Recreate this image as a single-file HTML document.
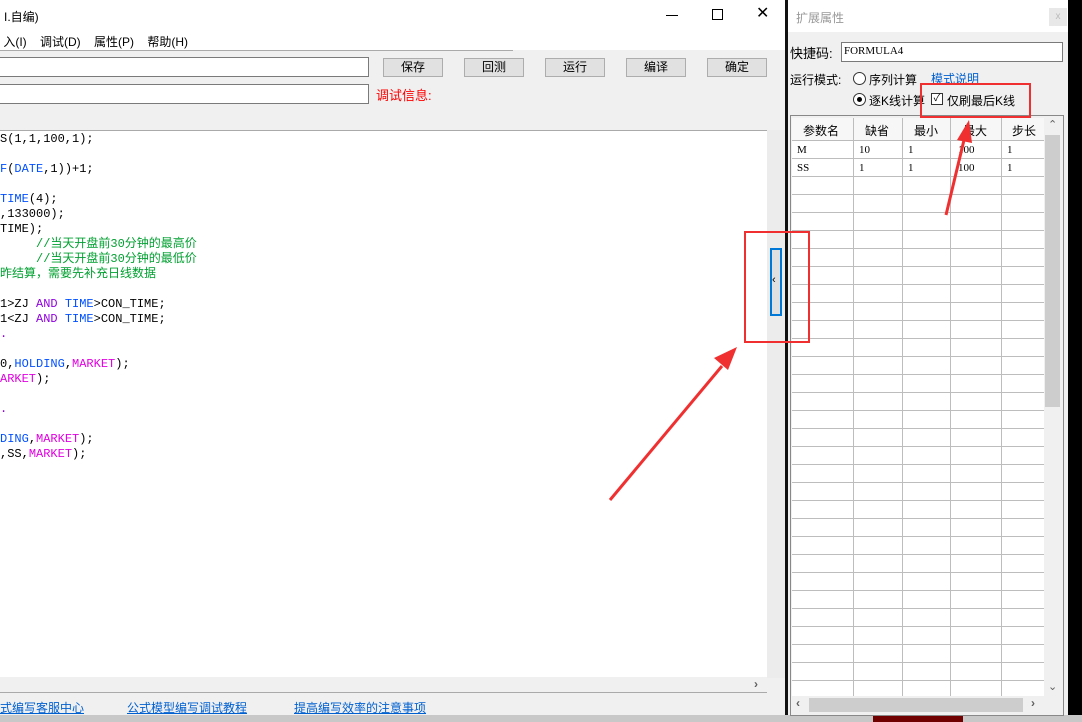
<!DOCTYPE html>
<html><head><meta charset="utf-8"><style>
*{margin:0;padding:0;box-sizing:border-box}
body{width:1082px;height:722px;overflow:hidden;position:relative;background:#f0f0f0;font-family:"Liberation Sans","Noto Sans CJK SC",sans-serif;font-size:12px;color:#000}
.a{position:absolute}
.code{font-family:"Liberation Mono","Noto Sans CJK SC",monospace;font-size:12px;line-height:15px;white-space:pre}
.b{color:#0050ff}.p{color:#e000e0}.v{color:#9000e0}.g{color:#00a030}
.btn{position:absolute;top:58px;width:60px;height:19px;background:#e1e1e1;border:1px solid #adadad;text-align:center;line-height:17px;font-size:12px}
.inp{position:absolute;background:#fff;border:1px solid #7a7a7a}
.lnk{color:#0060d0;text-decoration:underline}
.cell{font-family:'Liberation Serif',serif;font-size:11px;line-height:18px}
</style></head><body>
<div class="a" style="left:0;top:0;width:785px;height:50px;background:#fff"></div>
<div class="a" style="left:4px;top:8px;font-size:12px">I.自编)</div>
<div class="a" style="left:0;top:33px;font-size:12px">&nbsp;入(I)&nbsp;&nbsp;&nbsp;&nbsp;调试(D)&nbsp;&nbsp;&nbsp;&nbsp;属性(P)&nbsp;&nbsp;&nbsp;&nbsp;帮助(H)</div>
<div class="a" style="left:666px;top:15px;width:12px;height:1px;background:#000"></div>
<div class="a" style="left:712px;top:9px;width:11px;height:11px;border:1px solid #000"></div>
<div class="a" style="left:756px;top:5px;font-size:16px;line-height:18px">✕</div>
<div class="a" style="left:0;top:50px;width:513px;height:1px;background:#aaa"></div>
<div class="inp" style="left:-2px;top:57px;width:371px;height:20px"></div>
<div class="inp" style="left:-2px;top:84px;width:371px;height:20px"></div>
<div class="btn" style="left:383px">保存</div>
<div class="btn" style="left:464px">回测</div>
<div class="btn" style="left:545px">运行</div>
<div class="btn" style="left:626px">编译</div>
<div class="btn" style="left:707px">确定</div>
<div class="a" style="left:376px;top:85px;color:#f00;font-size:13px">调试信息:</div>
<div class="a" style="left:0;top:130px;width:767px;height:547px;background:#fff;border-top:1px solid #aaa"></div>
<div class="a code" style="left:0;top:132px">S(1,1,100,1);

<span class="b">F</span>(<span class="b">DATE</span>,1))+1;

<span class="b">TIME</span>(4);
,133000);
TIME);
<span class="g">     //当天开盘前30分钟的最高价</span>
<span class="g">     //当天开盘前30分钟的最低价</span>
<span class="g">昨结算，需要先补充日线数据</span>

1&gt;ZJ <span class="v">AND</span> <span class="b">TIME</span>&gt;CON_TIME;
1&lt;ZJ <span class="v">AND</span> <span class="b">TIME</span>&gt;CON_TIME;
<span class="v">.</span>

0,<span class="b">HOLDING</span>,<span class="p">MARKET</span>);
<span class="p">ARKET</span>);

<span class="v">.</span>

<span class="b">DING</span>,<span class="p">MARKET</span>);
,SS,<span class="p">MARKET</span>);</div>
<div class="a" style="left:767px;top:130px;width:18px;height:548px;background:#ececec"></div>
<div class="a" style="left:0;top:677px;width:767px;height:16px;background:#f0f0f0;border-bottom:1px solid #aaa"></div>
<div class="a" style="left:754px;top:677px;color:#606060;font-size:12px;font-weight:bold">›</div>
<div class="a" style="left:0;top:699px;font-size:12px"><span class="lnk">式编写客服中心</span></div>
<div class="a" style="left:127px;top:699px;font-size:12px"><span class="lnk">公式模型编写调试教程</span></div>
<div class="a" style="left:294px;top:699px;font-size:12px"><span class="lnk">提高编写效率的注意事项</span></div>
<div class="a" style="left:0;top:715px;width:1082px;height:7px;background:#c8c8c8"></div>
<div class="a" style="left:873px;top:715px;width:90px;height:7px;background:#700000"></div>
<div class="a" style="left:770px;top:248px;width:12px;height:68px;background:#e0e0e0;border:2px solid #0078d7"></div>
<div class="a" style="left:772px;top:274px;font-size:11px">‹</div>
<div class="a" style="left:785px;top:0;width:3px;height:715px;background:#111"></div>
<div class="a" style="left:1068px;top:0;width:14px;height:715px;background:#000"></div>
<div class="a" style="left:788px;top:0;width:280px;height:715px;background:#f0f0f0"></div>
<div class="a" style="left:788px;top:0;width:280px;height:32px;background:#fff"></div>
<div class="a" style="left:796px;top:9px;color:#999;font-size:12px">扩展属性</div>
<div class="a" style="left:1049px;top:8px;width:18px;height:18px;background:#e8e8e8;color:#bbb;font-size:10px;text-align:center;line-height:18px">x</div>
<div class="a" style="left:790px;top:43px;font-size:13px">快捷码:</div>
<div class="inp" style="left:841px;top:42px;width:222px;height:20px;font-family:'Liberation Serif',serif;font-size:11px;padding:2px 2px">FORMULA4</div>
<div class="a" style="left:790px;top:71px;font-size:12px">运行模式:</div>
<div class="a" style="left:853px;top:72px;width:13px;height:13px;border:1px solid #333;border-radius:50%;background:#fff"></div>
<div class="a" style="left:869px;top:71px">序列计算</div>
<div class="a" style="left:931px;top:70px"><span class="lnk">模式说明</span></div>
<div class="a" style="left:853px;top:93px;width:13px;height:13px;border:1px solid #333;border-radius:50%;background:#fff"></div>
<div class="a" style="left:857px;top:97px;width:5px;height:5px;border-radius:50%;background:#000"></div>
<div class="a" style="left:869px;top:92px">逐K线计算</div>
<div class="a" style="left:931px;top:93px;width:12px;height:12px;border:1px solid #333;background:#fff;font-size:10px;line-height:10px;text-align:center">✓</div>
<div class="a" style="left:947px;top:92px">仅刷最后K线</div>
<div class="a" style="left:790px;top:115px;width:274px;height:601px;border:1px solid #888;background:#f0f0f0"></div>
<div class="a" style="left:792px;top:118px;width:252px;height:578px;background:#fff;
background-image:repeating-linear-gradient(to bottom,transparent 0,transparent 17px,#bdbdbd 17px,#bdbdbd 18px);background-position:0 5px"></div>
<div class="a" style="left:792px;top:118px;width:252px;height:23px;background:#f7f7f7;border-bottom:1px solid #bbb"></div>
<div class="a" style="left:853px;top:118px;width:1px;height:578px;background:#bdbdbd"></div>
<div class="a" style="left:902px;top:118px;width:1px;height:578px;background:#bdbdbd"></div>
<div class="a" style="left:950px;top:118px;width:1px;height:578px;background:#bdbdbd"></div>
<div class="a" style="left:1001px;top:118px;width:1px;height:578px;background:#bdbdbd"></div>
<div class="a" style="left:803px;top:122px">参数名</div>
<div class="a" style="left:865px;top:122px">缺省</div>
<div class="a" style="left:914px;top:122px">最小</div>
<div class="a" style="left:963px;top:122px">最大</div>
<div class="a" style="left:1012px;top:122px">步长</div>
<div class="a cell" style="left:797px;top:141px">M<br>SS</div>
<div class="a cell" style="left:859px;top:141px">10<br>1</div>
<div class="a cell" style="left:908px;top:141px">1<br>1</div>
<div class="a cell" style="left:958px;top:141px">100<br>100</div>
<div class="a cell" style="left:1007px;top:141px">1<br>1</div>
<div class="a" style="left:1044px;top:118px;width:18px;height:578px;background:#f0f0f0"></div>
<div class="a" style="left:1045px;top:135px;width:15px;height:272px;background:#cdcdcd"></div>
<div class="a" style="left:1048px;top:118px;color:#606060;font-size:11px">⌃</div>
<div class="a" style="left:1048px;top:680px;color:#606060;font-size:11px">⌄</div>
<div class="a" style="left:792px;top:696px;width:252px;height:18px;background:#f0f0f0"></div>
<div class="a" style="left:809px;top:698px;width:214px;height:14px;background:#cdcdcd"></div>
<div class="a" style="left:796px;top:696px;color:#606060;font-weight:bold">‹</div>
<div class="a" style="left:1031px;top:696px;color:#606060;font-weight:bold">›</div>
<div class="a" style="left:744px;top:231px;width:66px;height:112px;border:2px solid #f03030"></div>
<div class="a" style="left:920px;top:83px;width:111px;height:35px;border:2px solid #f03030"></div>
<svg class="a" style="left:0;top:0" width="1082" height="722">
<line x1="610" y1="500" x2="722" y2="366" stroke="#f03030" stroke-width="3"/>
<polygon points="737,347 714,358 728,370" fill="#f03030"/>
<line x1="946" y1="215" x2="964" y2="140" stroke="#f03030" stroke-width="3"/>
<polygon points="969,120 957,140 972,143" fill="#f03030"/>
</svg>
</body></html>
